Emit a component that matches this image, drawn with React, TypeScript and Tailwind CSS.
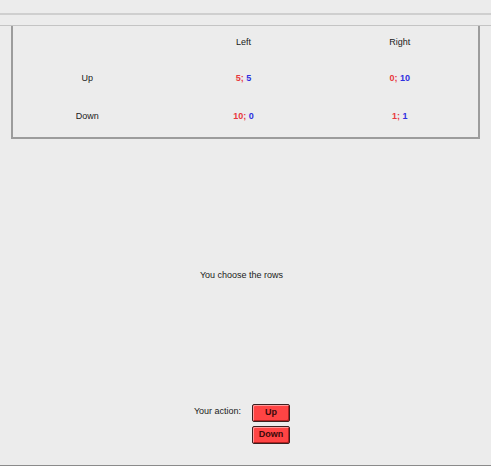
export default function App() {
  const rows = [
    { label: 'Up', left: ['5', '5'], right: ['0', '10'] },
    { label: 'Down', left: ['10', '0'], right: ['1', '1'] },
  ];

  const Pay = ({ v }: { v: string[] }) => (
    <span className="font-bold">
      <span className="text-[#e8383d]">{v[0]};</span>{' '}
      <span className="text-[#2f2fe0]">{v[1]}</span>
    </span>
  );

  return (
    <div
      className="flex h-[466px] w-[491px] flex-col bg-[#ececec] text-[9px] text-[#1a1a1a]"
      style={{ fontFamily: '"Liberation Sans", Arial, sans-serif' }}
    >
      <div className="h-[13px]" />
      <div className="h-[2px] bg-[#cfcfcf]" />
      <div className="h-[10px]" />
      <div className="h-px bg-[#c4c4c4]" />

      {/* payoff table */}
      <div className="mx-[11px] flex flex-col border-x-2 border-b-2 border-[#9c9c9c] pb-[1px]">
        <div className="-ml-[4px] mb-[1px] grid h-[33px] grid-cols-3 items-center pt-[1px] text-center">
          <div />
          <div>Left</div>
          <div>Right</div>
        </div>
        {rows.map((r) => (
          <div key={r.label} className="-ml-[4px] grid h-[38px] grid-cols-3 items-center text-center">
            <div>{r.label}</div>
            <div><Pay v={r.left} /></div>
            <div><Pay v={r.right} /></div>
          </div>
        ))}
      </div>

      <div className="flex flex-1 flex-col items-center pr-[8px]">
        <div className="mt-[130px] text-center">You choose the rows</div>

        <div className="mt-[121px] flex items-start gap-[11px] pl-[1px]">
          <div className="pt-[1px]">Your action:</div>
          <div className="flex flex-col gap-[4px]">
            <button className="h-[18px] w-[38px] rounded-[2px] border border-[#3a2020] bg-[#ff4444] text-[9px] font-bold text-[#3a0a0a] shadow-[inset_1px_1px_0_#ff9a9a,inset_-1px_-1px_0_#b02020]">
              Up
            </button>
            <button className="h-[18px] w-[38px] rounded-[2px] border border-[#3a2020] bg-[#ff4444] text-[9px] font-bold text-[#3a0a0a] shadow-[inset_1px_1px_0_#ff9a9a,inset_-1px_-1px_0_#b02020]">
              Down
            </button>
          </div>
        </div>
      </div>

      <div className="h-px bg-[#8a8a8a]" />
    </div>
  );
}
